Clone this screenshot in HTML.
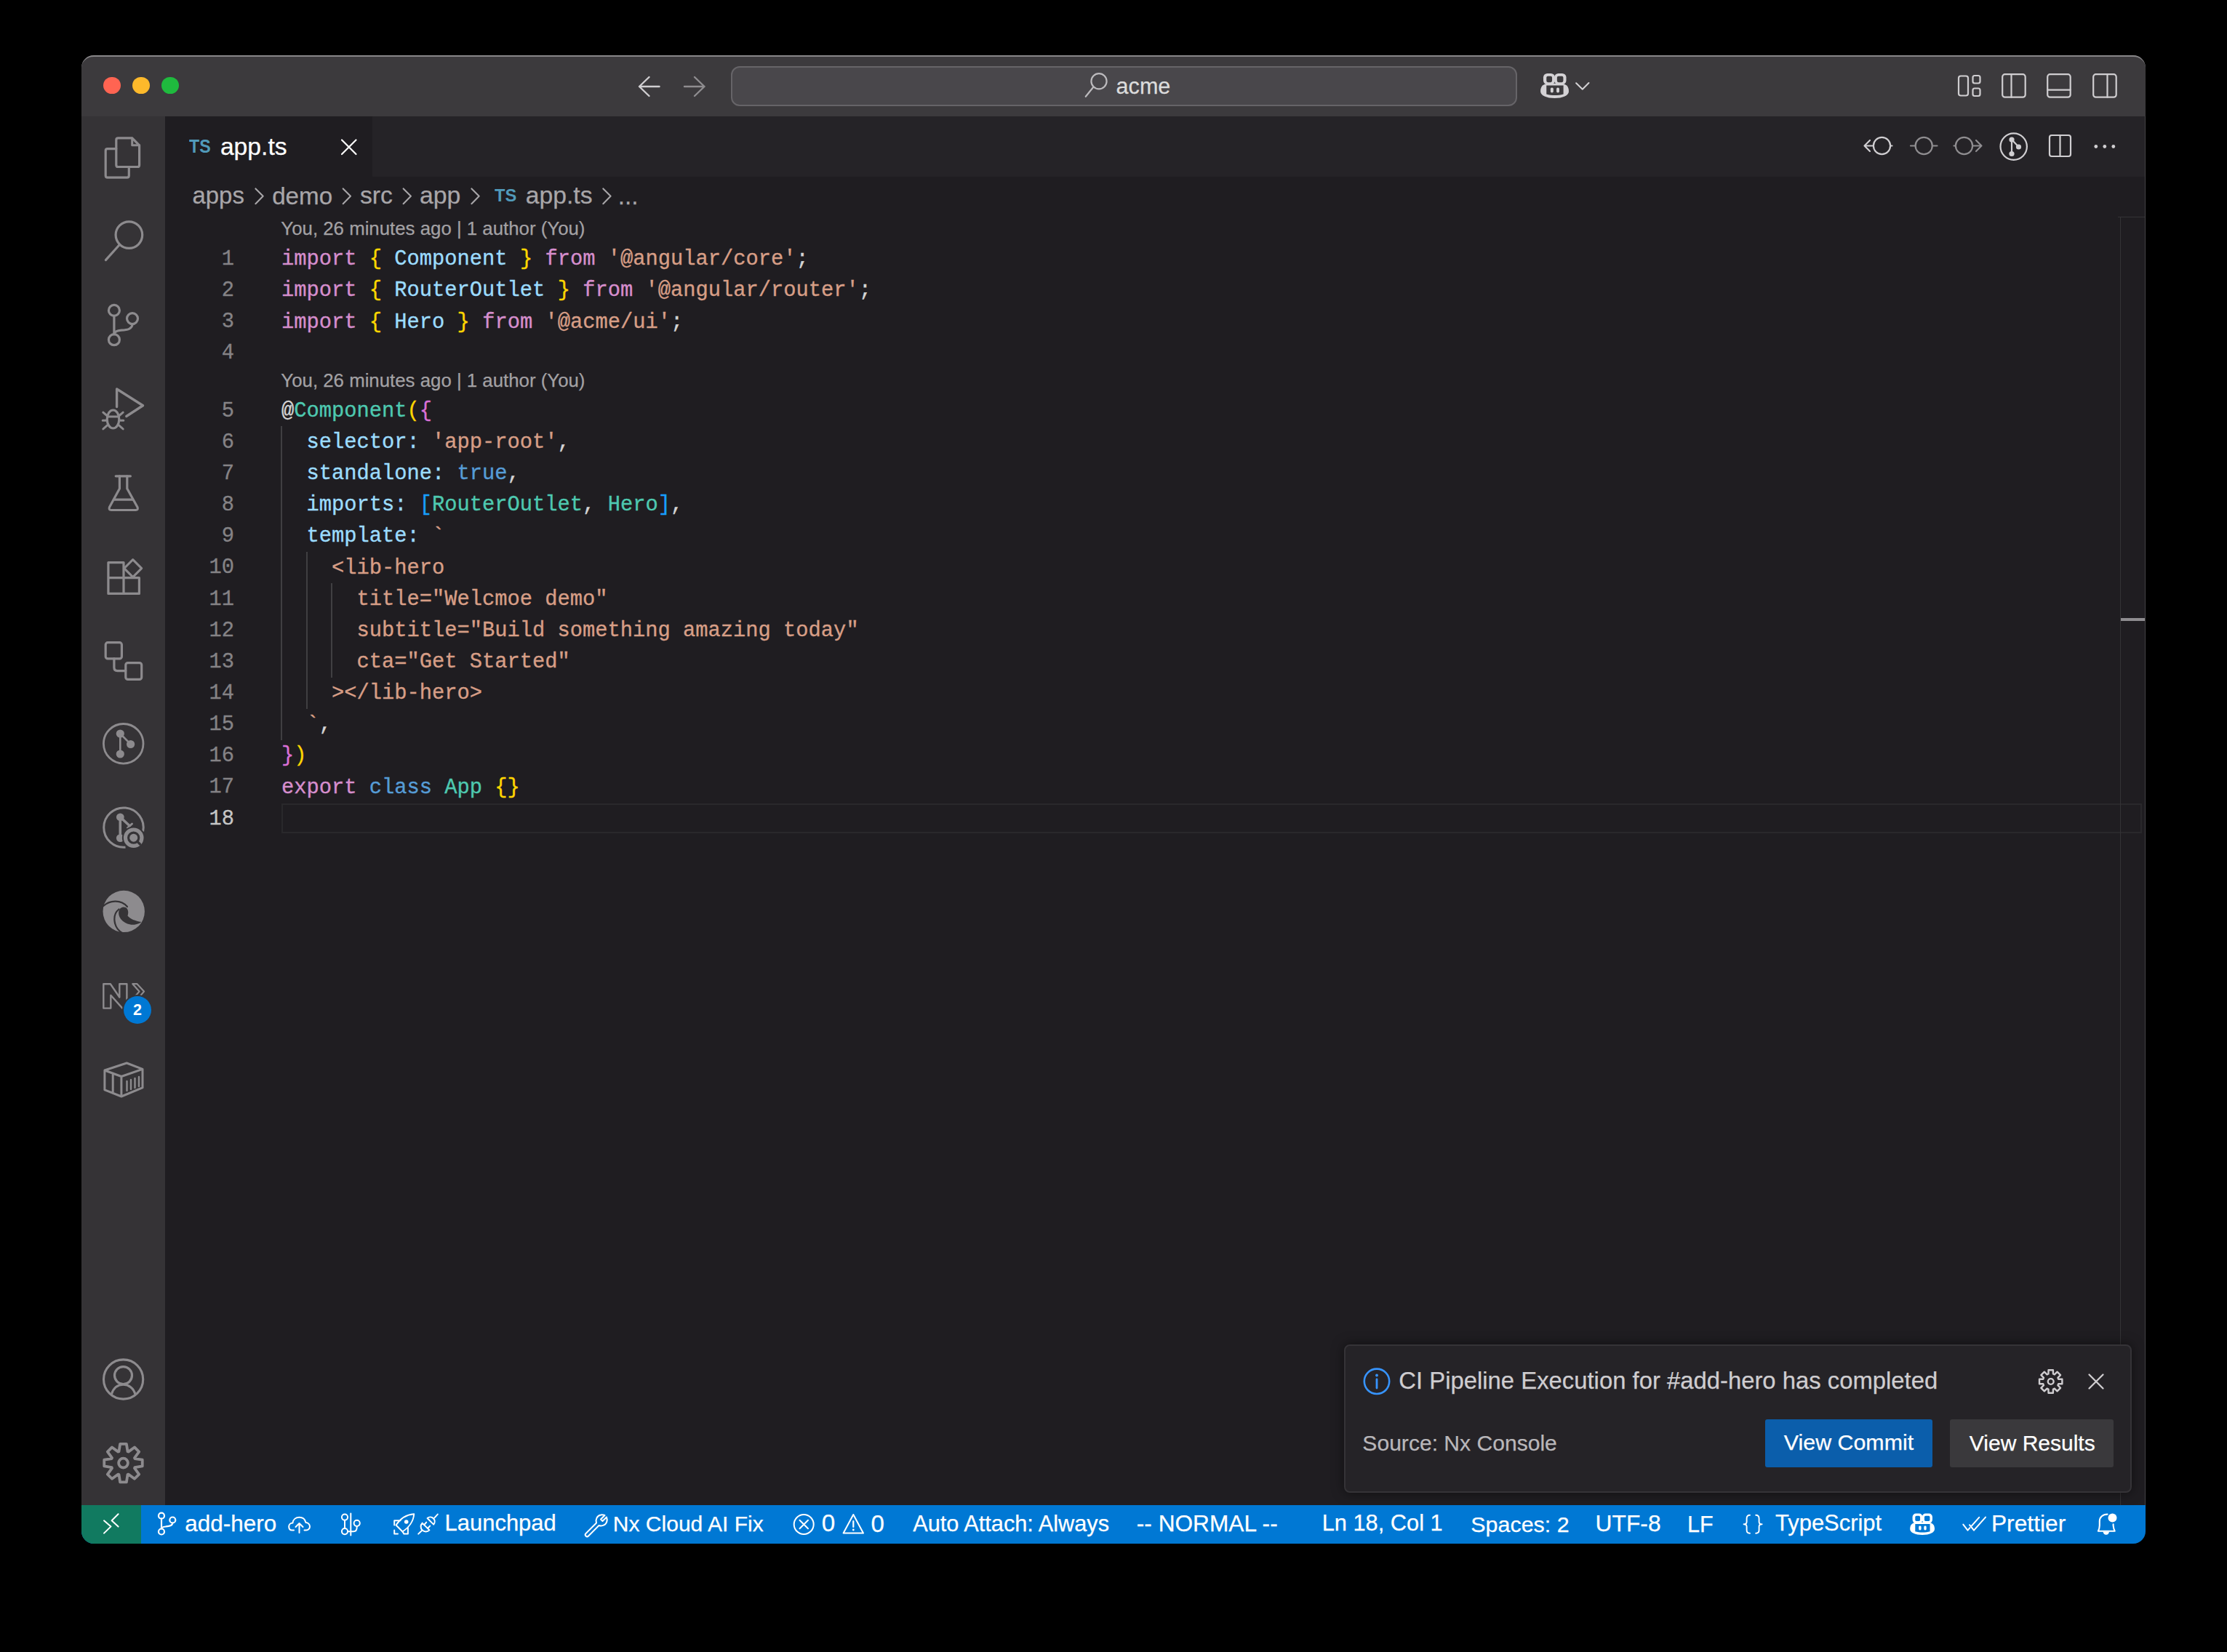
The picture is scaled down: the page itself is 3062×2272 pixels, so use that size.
<!DOCTYPE html>
<html><head><meta charset="utf-8"><title>VS Code</title>
<style>html,body{margin:0;padding:0;background:#000;}body{width:3062px;height:2272px;position:relative;overflow:hidden;}</style>
</head><body>
<div style="position:absolute;left:112px;top:76px;width:2838px;height:2047px;border-radius:17px;overflow:hidden;background:#1f1d21;"><div style="position:absolute;left:-112px;top:-76px;width:3062px;height:2272px;"><div style="position:absolute;left:112px;top:76px;width:2838px;height:84px;background:#3c3a3d;"></div><div style="position:absolute;left:112px;top:160px;width:115px;height:1910px;background:#353336;"></div><div style="position:absolute;left:227px;top:160px;width:2723px;height:1910px;background:#1f1d21;"></div><div style="position:absolute;left:227px;top:160px;width:2723px;height:83px;background:#252327;"></div><div style="position:absolute;left:227px;top:160px;width:285px;height:83px;background:#1f1d21;"></div><div style="position:absolute;left:112px;top:2070px;width:2838px;height:53px;background:#0078d4;"></div><div style="position:absolute;left:112px;top:2070px;width:82px;height:53px;background:#117a60;"></div><div style="position:absolute;left:142.4px;top:106.0px;width:23.2px;height:23.2px;border-radius:50%;background:#ff6452;"></div><div style="position:absolute;left:182.4px;top:106.0px;width:23.2px;height:23.2px;border-radius:50%;background:#fdb92b;"></div><div style="position:absolute;left:222.4px;top:106.0px;width:23.2px;height:23.2px;border-radius:50%;background:#1fba3e;"></div><div style="position:absolute;left:1005px;top:90.8px;width:1081px;height:54.8px;box-sizing:border-box;border:2px solid #666468;border-radius:12px;background:#49474b;"></div><div style="position:absolute;left:1534.62px;top:103.37px;font-family:'Liberation Sans';font-size:30.573px;line-height:30.573px;color:#dcdcdc;font-weight:400;white-space:pre;-webkit-text-stroke-width:0.25px;">acme</div><div style="position:absolute;left:260.17px;top:189.02px;font-family:'Liberation Sans';font-size:25.352px;line-height:25.352px;color:#519aba;font-weight:700;white-space:pre;transform:scaleX(0.9172);transform-origin:0 0;">TS</div><div style="position:absolute;left:302.88px;top:184.95px;font-family:'Liberation Sans';font-size:33.674px;line-height:33.674px;color:#ffffff;font-weight:400;white-space:pre;-webkit-text-stroke-width:0.25px;">app.ts</div><div style="position:absolute;left:264.52px;top:253.10px;font-family:'Liberation Sans';font-size:32.902px;line-height:32.902px;color:#a8a6a9;font-weight:400;white-space:pre;-webkit-text-stroke-width:0.25px;">apps</div><div style="position:absolute;left:374.17px;top:252.86px;font-family:'Liberation Sans';font-size:33.182px;line-height:33.182px;color:#a8a6a9;font-weight:400;white-space:pre;-webkit-text-stroke-width:0.25px;">demo</div><div style="position:absolute;left:494.99px;top:252.40px;font-family:'Liberation Sans';font-size:33.725px;line-height:33.725px;color:#a8a6a9;font-weight:400;white-space:pre;-webkit-text-stroke-width:0.25px;">src</div><div style="position:absolute;left:576.88px;top:252.34px;font-family:'Liberation Sans';font-size:33.797px;line-height:33.797px;color:#a8a6a9;font-weight:400;white-space:pre;-webkit-text-stroke-width:0.25px;">app</div><div style="position:absolute;left:680.26px;top:256.83px;font-family:'Liberation Sans';font-size:24.648px;line-height:24.648px;color:#519aba;font-weight:700;white-space:pre;transform:scaleX(0.9632);transform-origin:0 0;">TS</div><div style="position:absolute;left:722.78px;top:252.41px;font-family:'Liberation Sans';font-size:33.712px;line-height:33.712px;color:#a8a6a9;font-weight:400;white-space:pre;-webkit-text-stroke-width:0.25px;">app.ts</div><div style="position:absolute;left:849.69px;top:252.65px;font-family:'Liberation Sans';font-size:33.435px;line-height:33.435px;color:#a8a6a9;font-weight:400;white-space:pre;-webkit-text-stroke-width:0.25px;">...</div><div style="position:absolute;left:387.00px;top:1104.95px;width:2558.00px;height:41.15px;box-sizing:border-box;border:2.5px solid #29282b;"></div><div style="position:absolute;left:386.00px;top:586.35px;width:2px;height:431.50px;background:#403f42;"></div><div style="position:absolute;left:420.50px;top:758.95px;width:2px;height:215.75px;background:#403f42;"></div><div style="position:absolute;left:455.00px;top:802.10px;width:2px;height:129.45px;background:#403f42;"></div><div style="position:absolute;left:200px;width:122px;text-align:right;top:335.00px;height:43.15px;line-height:43.15px;font-family:'Liberation Mono', monospace;font-size:28.75px;color:#858386;white-space:pre;-webkit-text-stroke-width:0.3px;">1</div><div style="position:absolute;left:387.00px;top:335.20px;height:43.15px;line-height:43.15px;font-family:'Liberation Mono', monospace;font-size:28.75px;white-space:pre;-webkit-text-stroke-width:0.35px;"><span style="color:#d68ecd">import</span><span style="color:#d4d4d4"> </span><span style="color:#ffd700">{</span><span style="color:#d4d4d4"> </span><span style="color:#9cdcfe">Component</span><span style="color:#d4d4d4"> </span><span style="color:#ffd700">}</span><span style="color:#d4d4d4"> </span><span style="color:#d68ecd">from</span><span style="color:#d4d4d4"> </span><span style="color:#d79e86">&#x27;@angular/core&#x27;</span><span style="color:#d4d4d4">;</span></div><div style="position:absolute;left:200px;width:122px;text-align:right;top:378.15px;height:43.15px;line-height:43.15px;font-family:'Liberation Mono', monospace;font-size:28.75px;color:#858386;white-space:pre;-webkit-text-stroke-width:0.3px;">2</div><div style="position:absolute;left:387.00px;top:378.35px;height:43.15px;line-height:43.15px;font-family:'Liberation Mono', monospace;font-size:28.75px;white-space:pre;-webkit-text-stroke-width:0.35px;"><span style="color:#d68ecd">import</span><span style="color:#d4d4d4"> </span><span style="color:#ffd700">{</span><span style="color:#d4d4d4"> </span><span style="color:#9cdcfe">RouterOutlet</span><span style="color:#d4d4d4"> </span><span style="color:#ffd700">}</span><span style="color:#d4d4d4"> </span><span style="color:#d68ecd">from</span><span style="color:#d4d4d4"> </span><span style="color:#d79e86">&#x27;@angular/router&#x27;</span><span style="color:#d4d4d4">;</span></div><div style="position:absolute;left:200px;width:122px;text-align:right;top:421.30px;height:43.15px;line-height:43.15px;font-family:'Liberation Mono', monospace;font-size:28.75px;color:#858386;white-space:pre;-webkit-text-stroke-width:0.3px;">3</div><div style="position:absolute;left:387.00px;top:421.50px;height:43.15px;line-height:43.15px;font-family:'Liberation Mono', monospace;font-size:28.75px;white-space:pre;-webkit-text-stroke-width:0.35px;"><span style="color:#d68ecd">import</span><span style="color:#d4d4d4"> </span><span style="color:#ffd700">{</span><span style="color:#d4d4d4"> </span><span style="color:#9cdcfe">Hero</span><span style="color:#d4d4d4"> </span><span style="color:#ffd700">}</span><span style="color:#d4d4d4"> </span><span style="color:#d68ecd">from</span><span style="color:#d4d4d4"> </span><span style="color:#d79e86">&#x27;@acme/ui&#x27;</span><span style="color:#d4d4d4">;</span></div><div style="position:absolute;left:200px;width:122px;text-align:right;top:464.45px;height:43.15px;line-height:43.15px;font-family:'Liberation Mono', monospace;font-size:28.75px;color:#858386;white-space:pre;-webkit-text-stroke-width:0.3px;">4</div><div style="position:absolute;left:387.00px;top:464.65px;height:43.15px;line-height:43.15px;font-family:'Liberation Mono', monospace;font-size:28.75px;white-space:pre;-webkit-text-stroke-width:0.35px;"></div><div style="position:absolute;left:200px;width:122px;text-align:right;top:543.60px;height:43.15px;line-height:43.15px;font-family:'Liberation Mono', monospace;font-size:28.75px;color:#858386;white-space:pre;-webkit-text-stroke-width:0.3px;">5</div><div style="position:absolute;left:387.00px;top:543.80px;height:43.15px;line-height:43.15px;font-family:'Liberation Mono', monospace;font-size:28.75px;white-space:pre;-webkit-text-stroke-width:0.35px;"><span style="color:#d4d4d4">@</span><span style="color:#4ec9b0">Component</span><span style="color:#ffd700">(</span><span style="color:#da70d6">{</span></div><div style="position:absolute;left:200px;width:122px;text-align:right;top:586.75px;height:43.15px;line-height:43.15px;font-family:'Liberation Mono', monospace;font-size:28.75px;color:#858386;white-space:pre;-webkit-text-stroke-width:0.3px;">6</div><div style="position:absolute;left:387.00px;top:586.95px;height:43.15px;line-height:43.15px;font-family:'Liberation Mono', monospace;font-size:28.75px;white-space:pre;-webkit-text-stroke-width:0.35px;"><span style="color:#9cdcfe">  selector:</span><span style="color:#d4d4d4"> </span><span style="color:#d79e86">&#x27;app-root&#x27;</span><span style="color:#d4d4d4">,</span></div><div style="position:absolute;left:200px;width:122px;text-align:right;top:629.90px;height:43.15px;line-height:43.15px;font-family:'Liberation Mono', monospace;font-size:28.75px;color:#858386;white-space:pre;-webkit-text-stroke-width:0.3px;">7</div><div style="position:absolute;left:387.00px;top:630.10px;height:43.15px;line-height:43.15px;font-family:'Liberation Mono', monospace;font-size:28.75px;white-space:pre;-webkit-text-stroke-width:0.35px;"><span style="color:#9cdcfe">  standalone:</span><span style="color:#d4d4d4"> </span><span style="color:#569cd6">true</span><span style="color:#d4d4d4">,</span></div><div style="position:absolute;left:200px;width:122px;text-align:right;top:673.05px;height:43.15px;line-height:43.15px;font-family:'Liberation Mono', monospace;font-size:28.75px;color:#858386;white-space:pre;-webkit-text-stroke-width:0.3px;">8</div><div style="position:absolute;left:387.00px;top:673.25px;height:43.15px;line-height:43.15px;font-family:'Liberation Mono', monospace;font-size:28.75px;white-space:pre;-webkit-text-stroke-width:0.35px;"><span style="color:#9cdcfe">  imports:</span><span style="color:#d4d4d4"> </span><span style="color:#179fff">[</span><span style="color:#4ec9b0">RouterOutlet</span><span style="color:#d4d4d4">,</span><span style="color:#d4d4d4"> </span><span style="color:#4ec9b0">Hero</span><span style="color:#179fff">]</span><span style="color:#d4d4d4">,</span></div><div style="position:absolute;left:200px;width:122px;text-align:right;top:716.20px;height:43.15px;line-height:43.15px;font-family:'Liberation Mono', monospace;font-size:28.75px;color:#858386;white-space:pre;-webkit-text-stroke-width:0.3px;">9</div><div style="position:absolute;left:387.00px;top:716.40px;height:43.15px;line-height:43.15px;font-family:'Liberation Mono', monospace;font-size:28.75px;white-space:pre;-webkit-text-stroke-width:0.35px;"><span style="color:#9cdcfe">  template:</span><span style="color:#d4d4d4"> </span><span style="color:#d79e86">`</span></div><div style="position:absolute;left:200px;width:122px;text-align:right;top:759.35px;height:43.15px;line-height:43.15px;font-family:'Liberation Mono', monospace;font-size:28.75px;color:#858386;white-space:pre;-webkit-text-stroke-width:0.3px;">10</div><div style="position:absolute;left:387.00px;top:759.55px;height:43.15px;line-height:43.15px;font-family:'Liberation Mono', monospace;font-size:28.75px;white-space:pre;-webkit-text-stroke-width:0.35px;"><span style="color:#d79e86">    &lt;lib-hero</span></div><div style="position:absolute;left:200px;width:122px;text-align:right;top:802.50px;height:43.15px;line-height:43.15px;font-family:'Liberation Mono', monospace;font-size:28.75px;color:#858386;white-space:pre;-webkit-text-stroke-width:0.3px;">11</div><div style="position:absolute;left:387.00px;top:802.70px;height:43.15px;line-height:43.15px;font-family:'Liberation Mono', monospace;font-size:28.75px;white-space:pre;-webkit-text-stroke-width:0.35px;"><span style="color:#d79e86">      title=&quot;Welcmoe demo&quot;</span></div><div style="position:absolute;left:200px;width:122px;text-align:right;top:845.65px;height:43.15px;line-height:43.15px;font-family:'Liberation Mono', monospace;font-size:28.75px;color:#858386;white-space:pre;-webkit-text-stroke-width:0.3px;">12</div><div style="position:absolute;left:387.00px;top:845.85px;height:43.15px;line-height:43.15px;font-family:'Liberation Mono', monospace;font-size:28.75px;white-space:pre;-webkit-text-stroke-width:0.35px;"><span style="color:#d79e86">      subtitle=&quot;Build something amazing today&quot;</span></div><div style="position:absolute;left:200px;width:122px;text-align:right;top:888.80px;height:43.15px;line-height:43.15px;font-family:'Liberation Mono', monospace;font-size:28.75px;color:#858386;white-space:pre;-webkit-text-stroke-width:0.3px;">13</div><div style="position:absolute;left:387.00px;top:889.00px;height:43.15px;line-height:43.15px;font-family:'Liberation Mono', monospace;font-size:28.75px;white-space:pre;-webkit-text-stroke-width:0.35px;"><span style="color:#d79e86">      cta=&quot;Get Started&quot;</span></div><div style="position:absolute;left:200px;width:122px;text-align:right;top:931.95px;height:43.15px;line-height:43.15px;font-family:'Liberation Mono', monospace;font-size:28.75px;color:#858386;white-space:pre;-webkit-text-stroke-width:0.3px;">14</div><div style="position:absolute;left:387.00px;top:932.15px;height:43.15px;line-height:43.15px;font-family:'Liberation Mono', monospace;font-size:28.75px;white-space:pre;-webkit-text-stroke-width:0.35px;"><span style="color:#d79e86">    &gt;&lt;/lib-hero&gt;</span></div><div style="position:absolute;left:200px;width:122px;text-align:right;top:975.10px;height:43.15px;line-height:43.15px;font-family:'Liberation Mono', monospace;font-size:28.75px;color:#858386;white-space:pre;-webkit-text-stroke-width:0.3px;">15</div><div style="position:absolute;left:387.00px;top:975.30px;height:43.15px;line-height:43.15px;font-family:'Liberation Mono', monospace;font-size:28.75px;white-space:pre;-webkit-text-stroke-width:0.35px;"><span style="color:#d79e86">  `</span><span style="color:#d4d4d4">,</span></div><div style="position:absolute;left:200px;width:122px;text-align:right;top:1018.25px;height:43.15px;line-height:43.15px;font-family:'Liberation Mono', monospace;font-size:28.75px;color:#858386;white-space:pre;-webkit-text-stroke-width:0.3px;">16</div><div style="position:absolute;left:387.00px;top:1018.45px;height:43.15px;line-height:43.15px;font-family:'Liberation Mono', monospace;font-size:28.75px;white-space:pre;-webkit-text-stroke-width:0.35px;"><span style="color:#da70d6">}</span><span style="color:#ffd700">)</span></div><div style="position:absolute;left:200px;width:122px;text-align:right;top:1061.40px;height:43.15px;line-height:43.15px;font-family:'Liberation Mono', monospace;font-size:28.75px;color:#858386;white-space:pre;-webkit-text-stroke-width:0.3px;">17</div><div style="position:absolute;left:387.00px;top:1061.60px;height:43.15px;line-height:43.15px;font-family:'Liberation Mono', monospace;font-size:28.75px;white-space:pre;-webkit-text-stroke-width:0.35px;"><span style="color:#d68ecd">export</span><span style="color:#d4d4d4"> </span><span style="color:#569cd6">class</span><span style="color:#d4d4d4"> </span><span style="color:#4ec9b0">App</span><span style="color:#d4d4d4"> </span><span style="color:#ffd700">{}</span></div><div style="position:absolute;left:200px;width:122px;text-align:right;top:1104.55px;height:43.15px;line-height:43.15px;font-family:'Liberation Mono', monospace;font-size:28.75px;color:#c6c6c6;white-space:pre;-webkit-text-stroke-width:0.3px;">18</div><div style="position:absolute;left:387.00px;top:1104.75px;height:43.15px;line-height:43.15px;font-family:'Liberation Mono', monospace;font-size:28.75px;white-space:pre;-webkit-text-stroke-width:0.35px;"></div><div style="position:absolute;left:386.35px;top:302.48px;font-family:'Liberation Sans';font-size:25.822px;line-height:25.822px;color:#a3a1a4;font-weight:400;white-space:pre;-webkit-text-stroke-width:0.25px;">You, 26 minutes ago | 1 author (You)</div><div style="position:absolute;left:386.35px;top:511.28px;font-family:'Liberation Sans';font-size:25.822px;line-height:25.822px;color:#a3a1a4;font-weight:400;white-space:pre;-webkit-text-stroke-width:0.25px;">You, 26 minutes ago | 1 author (You)</div><div style="position:absolute;left:2915px;top:298px;width:1px;height:1772px;background:#343336;"></div><div style="position:absolute;left:2916px;top:850px;width:33px;height:4px;background:#8f8d90;"></div><div style="position:absolute;left:2912px;top:297.5px;width:38px;height:1.0px;background:#343336;"></div><div style="position:absolute;left:254.29px;top:2079.93px;font-family:'Liberation Sans';font-size:31.443px;line-height:31.443px;color:#ffffff;font-weight:400;white-space:pre;-webkit-text-stroke-width:0.25px;">add-hero</div><div style="position:absolute;left:611.62px;top:2080.35px;font-family:'Liberation Sans';font-size:30.947px;line-height:30.947px;color:#ffffff;font-weight:400;white-space:pre;-webkit-text-stroke-width:0.25px;">Launchpad</div><div style="position:absolute;left:842.80px;top:2081.11px;font-family:'Liberation Sans';font-size:30.044px;line-height:30.044px;color:#ffffff;font-weight:400;white-space:pre;-webkit-text-stroke-width:0.25px;">Nx Cloud AI Fix</div><div style="position:absolute;left:1129.87px;top:2078.39px;font-family:'Liberation Sans';font-size:33.263px;line-height:33.263px;color:#ffffff;font-weight:400;white-space:pre;-webkit-text-stroke-width:0.25px;">0</div><div style="position:absolute;left:1197.48px;top:2078.57px;font-family:'Liberation Sans';font-size:33.053px;line-height:33.053px;color:#ffffff;font-weight:400;white-space:pre;-webkit-text-stroke-width:0.25px;">0</div><div style="position:absolute;left:1255.25px;top:2080.53px;font-family:'Liberation Sans';font-size:30.732px;line-height:30.732px;color:#ffffff;font-weight:400;white-space:pre;-webkit-text-stroke-width:0.25px;">Auto Attach: Always</div><div style="position:absolute;left:1562.78px;top:2079.75px;font-family:'Liberation Sans';font-size:31.656px;line-height:31.656px;color:#ffffff;font-weight:400;white-space:pre;-webkit-text-stroke-width:0.25px;">-- NORMAL --</div><div style="position:absolute;left:1817.74px;top:2080.48px;font-family:'Liberation Sans';font-size:30.788px;line-height:30.788px;color:#ffffff;font-weight:400;white-space:pre;-webkit-text-stroke-width:0.25px;">Ln 18, Col 1</div><div style="position:absolute;left:2022.33px;top:2080.80px;font-family:'Liberation Sans';font-size:30.414px;line-height:30.414px;color:#ffffff;font-weight:400;white-space:pre;-webkit-text-stroke-width:0.25px;">Spaces: 2</div><div style="position:absolute;left:2193.62px;top:2079.64px;font-family:'Liberation Sans';font-size:31.786px;line-height:31.786px;color:#ffffff;font-weight:400;white-space:pre;-webkit-text-stroke-width:0.25px;">UTF-8</div><div style="position:absolute;left:2319.96px;top:2080.71px;font-family:'Liberation Sans';font-size:30.526px;line-height:30.526px;color:#ffffff;font-weight:400;white-space:pre;-webkit-text-stroke-width:0.25px;">LF</div><div style="position:absolute;left:2441.03px;top:2080.34px;font-family:'Liberation Sans';font-size:30.959px;line-height:30.959px;color:#ffffff;font-weight:400;white-space:pre;-webkit-text-stroke-width:0.25px;">TypeScript</div><div style="position:absolute;left:2737.96px;top:2079.68px;font-family:'Liberation Sans';font-size:31.744px;line-height:31.744px;color:#ffffff;font-weight:400;white-space:pre;-webkit-text-stroke-width:0.25px;">Prettier</div><div style="position:absolute;left:1848px;top:1849px;width:1083px;height:204px;box-sizing:border-box;border:2px solid #353337;border-radius:8px;background:#252327;box-shadow:0 0 16px rgba(0,0,0,0.5);"></div><div style="position:absolute;left:1923.36px;top:1883.45px;font-family:'Liberation Sans';font-size:32.839px;line-height:32.839px;color:#cfcdd0;font-weight:400;white-space:pre;-webkit-text-stroke-width:0.25px;">CI Pipeline Execution for #add-hero has completed</div><div style="position:absolute;left:1873.35px;top:1969.58px;font-family:'Liberation Sans';font-size:30.085px;line-height:30.085px;color:#b9b7ba;font-weight:400;white-space:pre;-webkit-text-stroke-width:0.25px;">Source: Nx Console</div><div style="position:absolute;left:2427px;top:1952px;width:230px;height:66px;background:#0b5eab;border-radius:3px;"></div><div style="position:absolute;left:2681px;top:1952px;width:225px;height:66px;background:#3a393c;border-radius:3px;"></div><div style="position:absolute;left:2452.85px;top:1969.33px;font-family:'Liberation Sans';font-size:30.375px;line-height:30.375px;color:#ffffff;font-weight:400;white-space:pre;-webkit-text-stroke-width:0.25px;">View Commit</div><div style="position:absolute;left:2707.85px;top:1969.64px;font-family:'Liberation Sans';font-size:30.017px;line-height:30.017px;color:#ffffff;font-weight:400;white-space:pre;-webkit-text-stroke-width:0.25px;">View Results</div><div style="position:absolute;left:2949px;top:160px;width:1px;height:1910px;background:#444245;"></div></div></div><div style="position:absolute;left:112px;top:75.5px;width:2838px;height:60px;box-sizing:border-box;border-radius:17px 17px 0 0;border-top:2px solid rgba(200,198,201,0.55);pointer-events:none;"></div><svg width="3062" height="2272" viewBox="0 0 3062 2272" style="position:absolute;left:0;top:0;pointer-events:none;"><path d="M159.8 192.5 Q159.8 189.9 162.4 189.9 H181.7 L191.6 199.8 V226.9 Q191.6 229.5 189 229.5 H162.4 Q159.8 229.5 159.8 226.9 Z" fill="none" stroke="#8d8b8e" stroke-width="3.2" stroke-linecap="round" stroke-linejoin="round" /><path d="M181.7 189.9 V199.8 H191.6" fill="none" stroke="#8d8b8e" stroke-width="3.0" stroke-linecap="round" stroke-linejoin="round" /><path d="M159.8 204.6 H147.8 Q145.2 204.6 145.2 207.2 V241.5 Q145.2 244.1 147.8 244.1 H174.7 Q177.3 244.1 177.3 241.5 V229.5" fill="none" stroke="#8d8b8e" stroke-width="3.2" stroke-linecap="round" stroke-linejoin="round" /><circle cx="177.4" cy="323.1" r="18.3" fill="none" stroke="#8d8b8e" stroke-width="3.2"/><path d="M164.6 336.3 L145.4 357.6" fill="none" stroke="#8d8b8e" stroke-width="3.2" stroke-linecap="round" stroke-linejoin="round" /><circle cx="156.9" cy="426.9" r="7.5" fill="none" stroke="#8d8b8e" stroke-width="3.2"/><circle cx="182.0" cy="438.1" r="7.5" fill="none" stroke="#8d8b8e" stroke-width="3.2"/><circle cx="156.9" cy="467.2" r="7.5" fill="none" stroke="#8d8b8e" stroke-width="3.2"/><path d="M156.9 434.4 V459.7" fill="none" stroke="#8d8b8e" stroke-width="3.2" stroke-linecap="round" stroke-linejoin="round" /><path d="M182.0 445.6 C182.0 452.5 175 453.8 167 454.2 C161 454.6 157.5 456 156.9 459.7" fill="none" stroke="#8d8b8e" stroke-width="3.2" stroke-linecap="round" stroke-linejoin="round" /><path d="M160.6 559.5 V535 L196.5 557.8 L173.8 572.5" fill="none" stroke="#8d8b8e" stroke-width="3.4" stroke-linecap="round" stroke-linejoin="round" stroke-linecap="butt"/><ellipse cx="155.5" cy="576.5" rx="8.3" ry="12.5" fill="none" stroke="#8d8b8e" stroke-width="3.2"/><path d="M147.5 573 H163.5" fill="none" stroke="#8d8b8e" stroke-width="3.0" stroke-linecap="round" stroke-linejoin="round" /><path d="M141.8 567.2 L147.5 572 M169.2 567.2 L163.5 572 M141.2 578.3 H147 M169.8 578.3 H164 M141.8 590 L147.5 584.8 M169.2 590 L163.5 584.8" fill="none" stroke="#8d8b8e" stroke-width="3.0" stroke-linecap="round" stroke-linejoin="round" stroke-linecap="butt"/><path d="M159.2 654.8 H179.4" fill="none" stroke="#8d8b8e" stroke-width="3.2" stroke-linecap="round" stroke-linejoin="round" /><path d="M164.4 654.8 V672 L150.5 697.5 Q149 701.5 153 701.5 H186.5 Q190.5 701.5 189 697.5 L174.8 672 V654.8" fill="none" stroke="#8d8b8e" stroke-width="3.2" stroke-linecap="round" stroke-linejoin="round" /><path d="M157.5 687.2 H182" fill="none" stroke="#8d8b8e" stroke-width="3.2" stroke-linecap="round" stroke-linejoin="round" /><path d="M148.9 773.6 H170 V816.4 H148.9 Z M148.9 794.7 H191.4 V816.4 H170" fill="none" stroke="#8d8b8e" stroke-width="3.2" stroke-linecap="round" stroke-linejoin="round" /><path d="M182.7 769.6 L194.7 781.6 L182.7 793.6 L170.7 781.6 Z" fill="none" stroke="#8d8b8e" stroke-width="3.0" stroke-linecap="round" stroke-linejoin="round" /><rect x="145.2" y="883.7" width="22.2" height="22.2" rx="3" fill="none" stroke="#8d8b8e" stroke-width="3.2"/><rect x="172.8" y="911.6" width="21.9" height="22.8" rx="3" fill="none" stroke="#8d8b8e" stroke-width="3.2"/><path d="M156.9 905.9 V918 Q156.9 922.6 161.5 922.6 H172.8" fill="none" stroke="#8d8b8e" stroke-width="3.2" stroke-linecap="round" stroke-linejoin="round" /><circle cx="169.7" cy="1022.8" r="27.3" fill="none" stroke="#8d8b8e" stroke-width="2.8"/><path d="M165.3 1009 V1037 M165.3 1009 L179.6 1023.5" fill="none" stroke="#8d8b8e" stroke-width="2.6" stroke-linecap="round" stroke-linejoin="round" /><circle cx="165.3" cy="1009" r="5.6" fill="#8d8b8e"/><circle cx="179.6" cy="1023.5" r="5.6" fill="#8d8b8e"/><circle cx="165.3" cy="1037" r="5.6" fill="#8d8b8e"/><path d="M 196.6 1143.5 A 27.2 27.2 0 1 0 172.5 1165.2" fill="none" stroke="#8d8b8e" stroke-width="3.0"/><path d="M165.3 1123.8 V1152.6 M165.3 1123.8 L178 1135.5" fill="none" stroke="#8d8b8e" stroke-width="3.6" stroke-linecap="round" stroke-linejoin="round" /><path d="M175.5 1138.5 L181.5 1133" fill="none" stroke="#8d8b8e" stroke-width="3.0" stroke-linecap="round" stroke-linejoin="round" stroke-linecap="butt"/><circle cx="165.3" cy="1123.8" r="5.4" fill="#8d8b8e"/><circle cx="165.3" cy="1152.6" r="5.4" fill="#8d8b8e"/><circle cx="183.7" cy="1152.2" r="15.8" fill="#353336"/><circle cx="183.7" cy="1152.2" r="13.8" fill="#8d8b8e"/><circle cx="183.7" cy="1152.2" r="8.6" fill="#353336"/><circle cx="183.7" cy="1152.2" r="5.5" fill="#8d8b8e"/><path d="M189.5 1158 L192.5 1161" fill="none" stroke="#353336" stroke-width="3.2" stroke-linecap="round" stroke-linejoin="round" /><circle cx="170.2" cy="1253.4" r="28.7" fill="#8d8b8e"/><path d="M142.2 1246 C150 1238.5 166 1236 175 1247" fill="none" stroke="#353336" stroke-width="2.2" stroke-linecap="round" stroke-linejoin="round" /><path d="M163.5 1250.5 C154 1258 155.5 1276 168.5 1283.5" fill="none" stroke="#353336" stroke-width="2.2" stroke-linecap="round" stroke-linejoin="round" /><path d="M170 1247.5 C175.5 1247.5 177.5 1253 175.5 1259.5 C179 1264 186 1266.5 194.5 1268 C187 1273.5 176 1273 168.5 1266.5 C163.5 1262 162 1256 164 1251.5 C165.5 1248.5 167.5 1247.5 170 1247.5 Z" fill="#353336" /><path d="M142.3 1353.3 H151.8 L164.3 1371.5 V1353.3 H174.4 V1386.6 H168.3 L152.3 1368.8 V1386.6 H142.3 Z" fill="none" stroke="#8d8b8e" stroke-width="2.4" stroke-linecap="round" stroke-linejoin="round" stroke-linejoin="miter"/><path d="M182.3 1353.2 H188.5 L198 1363.6 L189.5 1373.5 M182.3 1353.2 L191.5 1363.6 L183 1373.5" fill="none" stroke="#8d8b8e" stroke-width="2.2" stroke-linecap="round" stroke-linejoin="round" stroke-linecap="butt" stroke-linejoin="miter"/><circle cx="189" cy="1389" r="21" fill="#353336"/><circle cx="189" cy="1389" r="19" fill="#0078d4"/><text x="189" y="1396" text-anchor="middle" font-family="Liberation Sans" font-weight="700" font-size="21.5" fill="#ffffff">2</text><path d="M143.9 1472 L174.2 1462 L196 1470.4 L166.9 1480.5 Z M143.9 1472 V1498.9 L166.9 1508 L196 1495.9 V1470.4 M166.9 1480.5 V1508 M155.2 1476.5 V1503.3" fill="none" stroke="#8d8b8e" stroke-width="3.0" stroke-linecap="round" stroke-linejoin="round" /><path d="M174.5 1487 V1500 M180 1485 V1498 M185.5 1483 V1496 M191 1481 V1494" fill="none" stroke="#8d8b8e" stroke-width="2.4" stroke-linecap="round" stroke-linejoin="round" /><circle cx="169.6" cy="1897" r="27.1" fill="none" stroke="#8d8b8e" stroke-width="3.1"/><circle cx="169.5" cy="1891.6" r="12.0" fill="none" stroke="#8d8b8e" stroke-width="3.2"/><path d="M153.3 1917.5 C156 1909 162 1904.3 169.6 1904.3 C177 1904.3 183.5 1909 186 1917.5" fill="none" stroke="#8d8b8e" stroke-width="3.1" stroke-linecap="round" stroke-linejoin="round" /><path d="M163.51 1996.19 L165.13 1985.86 L173.87 1985.86 L175.49 1996.19 L176.52 1996.62 L184.96 1990.46 L191.14 1996.64 L184.98 2005.08 L185.41 2006.11 L195.74 2007.73 L195.74 2016.47 L185.41 2018.09 L184.98 2019.12 L191.14 2027.56 L184.96 2033.74 L176.52 2027.58 L175.49 2028.01 L173.87 2038.34 L165.13 2038.34 L163.51 2028.01 L162.48 2027.58 L154.04 2033.74 L147.86 2027.56 L154.02 2019.12 L153.59 2018.09 L143.26 2016.47 L143.26 2007.73 L153.59 2006.11 L154.02 2005.08 L147.86 1996.64 L154.04 1990.46 L162.48 1996.62 Z" fill="none" stroke="#8d8b8e" stroke-width="3.8" stroke-linecap="round" stroke-linejoin="round" stroke-linejoin="miter"/><circle cx="169.5" cy="2012.1" r="6.4" fill="none" stroke="#8d8b8e" stroke-width="3.8"/><path d="M906.5 119 H879 M892.5 106 L879 119 L892.5 132" fill="none" stroke="#d0ced1" stroke-width="2.4" stroke-linecap="round" stroke-linejoin="round" /><path d="M941 119 H968.5 M955 106 L968.5 119 L955 132" fill="none" stroke="#8f8d90" stroke-width="2.4" stroke-linecap="round" stroke-linejoin="round" /><circle cx="1511" cy="111.8" r="10.6" fill="none" stroke="#bcbabd" stroke-width="2.2"/><path d="M1503.5 119.5 L1492.8 132.8" fill="none" stroke="#bcbabd" stroke-width="2.2" stroke-linecap="round" stroke-linejoin="round" /><g transform="translate(2118.1 100.9) scale(38.9 34.0)"><path d="M0 0.72 C0 0.53 0.1 0.41 0.3 0.41 H0.7 C0.9 0.41 1 0.53 1 0.72 C1 0.9 0.78 1 0.5 1 C0.22 1 0 0.9 0 0.72 Z" fill="#d4d2d5"/><rect x="0.1" y="0" width="0.41" height="0.45" rx="0.14" ry="0.16" fill="#d4d2d5"/><rect x="0.49" y="0" width="0.42" height="0.45" rx="0.14" ry="0.16" fill="#d4d2d5"/><rect x="0.21" y="0.11" width="0.2" height="0.25" rx="0.05" ry="0.06" fill="#3c3a3d"/><rect x="0.585" y="0.11" width="0.22" height="0.25" rx="0.05" ry="0.06" fill="#3c3a3d"/><path d="M0.21 0.49 H0.81 V0.84 C0.62 0.9 0.4 0.9 0.21 0.84 Z" fill="#3c3a3d"/><rect x="0.355" y="0.58" width="0.1" height="0.2" rx="0.05" ry="0.05" fill="#d4d2d5"/><rect x="0.565" y="0.58" width="0.1" height="0.2" rx="0.05" ry="0.05" fill="#d4d2d5"/></g><path d="M2167.1 114.2 L2175.8 122.8 L2184.5 114" fill="none" stroke="#d4d2d5" stroke-width="2.0" stroke-linecap="round" stroke-linejoin="round" /><rect x="2693" y="104.5" width="13" height="27" rx="3" fill="none" stroke="#cfcdd0" stroke-width="2.2"/><rect x="2712.5" y="104" width="10" height="10.5" rx="2.5" fill="none" stroke="#cfcdd0" stroke-width="2.2"/><rect x="2712.5" y="121.5" width="10" height="10.5" rx="2.5" fill="none" stroke="#cfcdd0" stroke-width="2.2"/><rect x="2753.2" y="102.2" width="31.5" height="31.5" rx="3.5" fill="none" stroke="#cfcdd0" stroke-width="2.2"/><rect x="2815.2" y="102.2" width="31.5" height="31.5" rx="3.5" fill="none" stroke="#cfcdd0" stroke-width="2.2"/><rect x="2878.2" y="102.2" width="31.5" height="31.5" rx="3.5" fill="none" stroke="#cfcdd0" stroke-width="2.2"/><path d="M2765.5 102.2 V133.7" fill="none" stroke="#cfcdd0" stroke-width="2.2" stroke-linecap="round" stroke-linejoin="round" /><path d="M2815.2 123.6 H2846.7" fill="none" stroke="#cfcdd0" stroke-width="2.2" stroke-linecap="round" stroke-linejoin="round" /><path d="M2897.5 102.2 V133.7" fill="none" stroke="#cfcdd0" stroke-width="2.2" stroke-linecap="round" stroke-linejoin="round" /><path d="M470 192.5 L489.5 212 M489.5 192.5 L470 212" fill="none" stroke="#ffffff" stroke-width="2.2" stroke-linecap="round" stroke-linejoin="round" stroke-linecap="butt"/><path d="M351.40000000000003 259.4 L361.70000000000005 269.8 L351.40000000000003 280.2" fill="none" stroke="#a8a6a9" stroke-width="2.1" stroke-linecap="round" stroke-linejoin="round" stroke-linecap="butt"/><path d="M471.7 259.4 L482.0 269.8 L471.7 280.2" fill="none" stroke="#a8a6a9" stroke-width="2.1" stroke-linecap="round" stroke-linejoin="round" stroke-linecap="butt"/><path d="M554.5999999999999 259.4 L564.9 269.8 L554.5999999999999 280.2" fill="none" stroke="#a8a6a9" stroke-width="2.1" stroke-linecap="round" stroke-linejoin="round" stroke-linecap="butt"/><path d="M648.4 259.4 L658.7 269.8 L648.4 280.2" fill="none" stroke="#a8a6a9" stroke-width="2.1" stroke-linecap="round" stroke-linejoin="round" stroke-linecap="butt"/><path d="M829.3 259.4 L839.6 269.8 L829.3 280.2" fill="none" stroke="#a8a6a9" stroke-width="2.1" stroke-linecap="round" stroke-linejoin="round" stroke-linecap="butt"/><circle cx="2587.5" cy="200.5" r="11.6" fill="none" stroke="#d0ced1" stroke-width="2.2"/><path d="M2575.9 200.5 H2563.5 M2571 193 L2563.5 200.5 L2571 208 M2599.1 200.5 H2601.5" fill="none" stroke="#d0ced1" stroke-width="2.2" stroke-linecap="round" stroke-linejoin="round" /><circle cx="2645.2" cy="200.5" r="11.6" fill="none" stroke="#8f8d90" stroke-width="2.2"/><path d="M2627 200.5 H2633.6 M2656.8 200.5 H2663.5" fill="none" stroke="#8f8d90" stroke-width="2.2" stroke-linecap="round" stroke-linejoin="round" /><circle cx="2700.5" cy="200.5" r="11.6" fill="none" stroke="#8f8d90" stroke-width="2.2"/><path d="M2688.9 200.5 H2686.5 M2712.1 200.5 H2724.5 M2717 193 L2724.5 200.5 L2717 208" fill="none" stroke="#8f8d90" stroke-width="2.2" stroke-linecap="round" stroke-linejoin="round" /><circle cx="2768.7" cy="201.6" r="18.2" fill="none" stroke="#d0ced1" stroke-width="2.2"/><path d="M2766 192 V211.5 M2766 192 L2775.5 202" fill="none" stroke="#d0ced1" stroke-width="2.2" stroke-linecap="round" stroke-linejoin="round" /><circle cx="2766" cy="192" r="3.6" fill="#d0ced1"/><circle cx="2775.5" cy="202" r="3.6" fill="#d0ced1"/><circle cx="2766" cy="211.5" r="3.6" fill="#d0ced1"/><rect x="2818" y="186" width="29" height="29" rx="3" fill="none" stroke="#d0ced1" stroke-width="2.2"/><path d="M2832.5 186 V215" fill="none" stroke="#d0ced1" stroke-width="2.2" stroke-linecap="round" stroke-linejoin="round" /><circle cx="2881.8" cy="201.5" r="2.4" fill="#d0ced1"/><circle cx="2893.8" cy="201.5" r="2.4" fill="#d0ced1"/><circle cx="2905.8" cy="201.5" r="2.4" fill="#d0ced1"/><path d="M143 2091.3 L152.5 2099.4 L143 2108.6 M162.6 2082.3 L153.6 2091.3 L162.6 2099.6" fill="none" stroke="#ffffff" stroke-width="2.0" stroke-linecap="round" stroke-linejoin="round" stroke-linecap="butt" stroke-linejoin="miter"/><circle cx="222" cy="2084.7" r="4.0" fill="none" stroke="#ffffff" stroke-width="2.2"/><circle cx="237.3" cy="2090.5" r="4.0" fill="none" stroke="#ffffff" stroke-width="2.2"/><circle cx="222" cy="2106.5" r="4.0" fill="none" stroke="#ffffff" stroke-width="2.2"/><path d="M222 2088.7 V2102.5 M237.3 2094.5 C237.3 2098.5 232 2099 228 2099.5 C224 2100 222 2101 222 2102.5" fill="none" stroke="#ffffff" stroke-width="2.2" stroke-linecap="round" stroke-linejoin="round" /><path d="M404 2104.5 H401.5 C398.5 2104.5 397.2 2102 397.2 2099.5 C397.2 2096.5 399.5 2094.5 402.5 2094.5 C403 2089.5 407 2086.8 411.5 2086.8 C416 2086.8 419.5 2089.5 420.5 2094 C423.5 2094 426 2096.5 426 2099.5 C426 2102 424 2104.5 421 2104.5 H418.5" fill="none" stroke="#ffffff" stroke-width="2.0" stroke-linecap="round" stroke-linejoin="round" /><path d="M411.5 2108 V2095.5 M406.5 2100 L411.5 2095 L416.5 2100" fill="none" stroke="#ffffff" stroke-width="2.0" stroke-linecap="round" stroke-linejoin="round" /><circle cx="474" cy="2086.6" r="4.1" fill="none" stroke="#ffffff" stroke-width="2.0"/><circle cx="474" cy="2106.1" r="4.1" fill="none" stroke="#ffffff" stroke-width="2.0"/><circle cx="490.7" cy="2094.8" r="4.1" fill="none" stroke="#ffffff" stroke-width="2.0"/><path d="M474 2090.7 V2102 M482.3 2081.5 V2111.5 M478.1 2106.3 H486 C489.5 2106.3 490.7 2104 490.7 2100.5 V2098.9" fill="none" stroke="#ffffff" stroke-width="2.0" stroke-linecap="round" stroke-linejoin="round" stroke-linecap="butt"/><path d="M569.2 2082.2 C559 2083 550 2089 544.5 2097.5 L553.5 2106.5 C562 2101 568.5 2092 569.2 2082.2 Z" fill="none" stroke="#ffffff" stroke-width="2.0" stroke-linecap="round" stroke-linejoin="round" /><path d="M550.5 2091.2 H542.2 V2097.5 M553.5 2106.5 L555.5 2109.6 H560.9 V2101" fill="none" stroke="#ffffff" stroke-width="2.0" stroke-linecap="round" stroke-linejoin="round" stroke-linecap="butt" stroke-linejoin="miter"/><circle cx="558.7" cy="2093" r="2.8" fill="#ffffff"/><path d="M542.2 2104.6 V2109.6 H547" fill="none" stroke="#ffffff" stroke-width="2.0" stroke-linecap="round" stroke-linejoin="round" stroke-linecap="butt" stroke-linejoin="miter"/><path d="M580.6 2094.6 L590.4 2104.4 A6.9 6.9 0 0 1 580.6 2094.6 Z" fill="none" stroke="#ffffff" stroke-width="2.0" stroke-linecap="round" stroke-linejoin="round" /><path d="M587.6 2088.0 L596.2 2096.6 A6.1 6.1 0 0 0 587.6 2088.0 Z" fill="none" stroke="#ffffff" stroke-width="2.0" stroke-linecap="round" stroke-linejoin="round" /><path d="M583.2 2097.2 L586.2 2093.6 M588 2102 L591.2 2098.6 M580.5 2104.5 L575.2 2109.6 M597.2 2087.6 L601.8 2082.6" fill="none" stroke="#ffffff" stroke-width="2.0" stroke-linecap="round" stroke-linejoin="round" stroke-linecap="butt"/><path d="M805.5 2109 L820 2094.5 C818.5 2089.5 821 2084.5 826 2083.5 C828 2083 830 2083.5 831.5 2084 L826 2089.5 L828.5 2092 L834 2086.5 C834.5 2088 835 2090 834.5 2092 C833.5 2097 828.5 2099.5 823.5 2098 L809 2112.5 C808 2113.5 806.5 2113.5 805.5 2112.5 C804.5 2111.5 804.5 2110 805.5 2109 Z" fill="none" stroke="#ffffff" stroke-width="2.0" stroke-linecap="round" stroke-linejoin="round" /><circle cx="1105.2" cy="2096.5" r="13.5" fill="none" stroke="#ffffff" stroke-width="2.0"/><path d="M1099.5 2090.8 L1111 2102.2 M1111 2090.8 L1099.5 2102.2" fill="none" stroke="#ffffff" stroke-width="2.0" stroke-linecap="round" stroke-linejoin="round" /><path d="M1173.3 2083 L1187 2108.5 H1159.6 Z" fill="none" stroke="#ffffff" stroke-width="2.0" stroke-linecap="round" stroke-linejoin="round" /><path d="M1173.3 2092 V2100" fill="none" stroke="#ffffff" stroke-width="2.2" stroke-linecap="round" stroke-linejoin="round" /><circle cx="1173.3" cy="2104" r="1.4" fill="#ffffff"/><path d="M2406 2083.8 C2402.5 2083.8 2401.6 2085.5 2401.6 2088.5 V2093 C2401.6 2095.3 2400.3 2096.3 2397.6 2096.3 C2400.3 2096.3 2401.6 2097.3 2401.6 2099.6 V2104.3 C2401.6 2107.3 2402.5 2108.8 2406 2108.8 M2414.2 2083.8 C2417.7 2083.8 2418.6 2085.5 2418.6 2088.5 V2093 C2418.6 2095.3 2419.9 2096.3 2422.6 2096.3 C2419.9 2096.3 2418.6 2097.3 2418.6 2099.6 V2104.3 C2418.6 2107.3 2417.7 2108.8 2414.2 2108.8" fill="none" stroke="#ffffff" stroke-width="1.9" stroke-linecap="round" stroke-linejoin="round" stroke-linecap="butt"/><g transform="translate(2626.2 2081.5) scale(33.8 29.5)"><path d="M0 0.72 C0 0.53 0.1 0.41 0.3 0.41 H0.7 C0.9 0.41 1 0.53 1 0.72 C1 0.9 0.78 1 0.5 1 C0.22 1 0 0.9 0 0.72 Z" fill="#ffffff"/><rect x="0.1" y="0" width="0.41" height="0.45" rx="0.14" ry="0.16" fill="#ffffff"/><rect x="0.49" y="0" width="0.42" height="0.45" rx="0.14" ry="0.16" fill="#ffffff"/><rect x="0.21" y="0.11" width="0.2" height="0.25" rx="0.05" ry="0.06" fill="#0078d4"/><rect x="0.585" y="0.11" width="0.22" height="0.25" rx="0.05" ry="0.06" fill="#0078d4"/><path d="M0.21 0.49 H0.81 V0.84 C0.62 0.9 0.4 0.9 0.21 0.84 Z" fill="#0078d4"/><rect x="0.355" y="0.58" width="0.1" height="0.2" rx="0.05" ry="0.05" fill="#ffffff"/><rect x="0.565" y="0.58" width="0.1" height="0.2" rx="0.05" ry="0.05" fill="#ffffff"/></g><path d="M2699.3 2096.6 L2705.5 2104.6 L2708.5 2101.2 M2711 2098.3 L2721.2 2086.8 M2708 2097.2 L2714 2104.6 L2730 2086.6" fill="none" stroke="#ffffff" stroke-width="2.0" stroke-linecap="round" stroke-linejoin="round" stroke-linecap="butt"/><path d="M2897.5 2082.6 C2891.2 2082.6 2886.9 2086.6 2886.8 2092 V2098 C2886.8 2101 2886 2103.5 2884.9 2105.8 H2907.7 C2906.6 2103.5 2905.8 2101 2905.6 2098 V2096.3" fill="none" stroke="#ffffff" stroke-width="2.1" stroke-linecap="round" stroke-linejoin="round" stroke-linecap="butt"/><circle cx="2904.5" cy="2087.6" r="6.0" fill="#ffffff"/><path d="M2891.6 2106.6 A4.2 4.2 0 0 0 2900 2106.6 Z" fill="#ffffff" /><circle cx="1893" cy="1899.8" r="17.2" fill="none" stroke="#3794ff" stroke-width="2.6"/><circle cx="1893" cy="1891.5" r="1.9" fill="#3794ff"/><path d="M1893 1897 V1909" fill="none" stroke="#3794ff" stroke-width="2.8" stroke-linecap="round" stroke-linejoin="round" stroke-linecap="butt"/><path d="M2816.45 1889.49 L2816.52 1884.32 L2822.88 1884.32 L2822.95 1889.49 L2824.83 1890.27 L2828.54 1886.66 L2833.04 1891.16 L2829.43 1894.87 L2830.21 1896.75 L2835.38 1896.82 L2835.38 1903.18 L2830.21 1903.25 L2829.43 1905.13 L2833.04 1908.84 L2828.54 1913.34 L2824.83 1909.73 L2822.95 1910.51 L2822.88 1915.68 L2816.52 1915.68 L2816.45 1910.51 L2814.57 1909.73 L2810.86 1913.34 L2806.36 1908.84 L2809.97 1905.13 L2809.19 1903.25 L2804.02 1903.18 L2804.02 1896.82 L2809.19 1896.75 L2809.97 1894.87 L2806.36 1891.16 L2810.86 1886.66 L2814.57 1890.27 Z" fill="none" stroke="#cfcdd0" stroke-width="2.4" stroke-linecap="round" stroke-linejoin="round" stroke-linejoin="miter"/><circle cx="2819.7" cy="1900.0" r="3.9" fill="none" stroke="#cfcdd0" stroke-width="2.4"/><path d="M2872.5 1890.5 L2891.5 1909.5 M2891.5 1890.5 L2872.5 1909.5" fill="none" stroke="#cfcdd0" stroke-width="2.3" stroke-linecap="round" stroke-linejoin="round" stroke-linecap="butt"/></svg>
</body></html>
